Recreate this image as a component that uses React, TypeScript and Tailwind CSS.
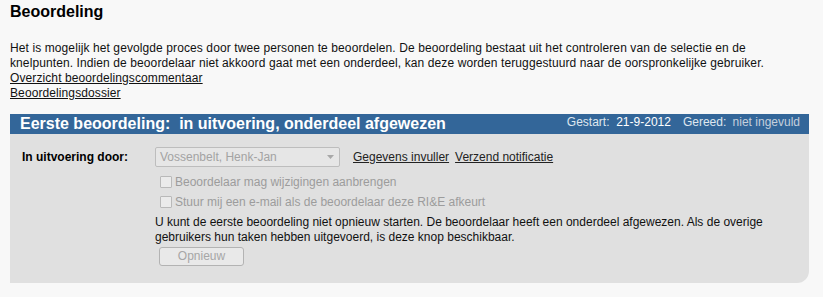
import React from "react";

const font = { fontFamily: '"Liberation Sans", Arial, sans-serif' };

function Checkbox({ label }: { label: string }) {
  return (
    <div className="flex items-center h-[20px] pl-[5px]">
      <span className="w-[12px] h-[12px] border border-[#b9b9b9] bg-[#ebebeb] rounded-[1px] shrink-0" />
      <span className="ml-[3px] text-[12px] leading-[20px] text-[#9c9c9c]">{label}</span>
    </div>
  );
}

export default function App() {
  return (
    <div className="w-[823px] h-[297px] bg-[#f8f8f8] pl-[10px] pt-[3px] text-[#111]" style={font}>
      <h1 className="text-[16px] leading-[18px] font-bold text-black">Beoordeling</h1>
      <div className="w-[775px] mt-[20px] text-[12px] leading-[15px] tracking-[0.1px]">
        <p>
          Het is mogelijk het gevolgde proces door twee personen te beoordelen. De beoordeling bestaat uit het controleren van de selectie en de knelpunten. Indien de beoordelaar niet akkoord gaat met een onderdeel, kan deze worden teruggestuurd naar de oorspronkelijke gebruiker.
        </p>
        <a href="#" className="block underline text-[#111]">Overzicht beoordelingscommentaar</a>
        <a href="#" className="block underline text-[#111]">Beoordelingsdossier</a>
      </div>

      <div className="w-[799px] mt-[13px] bg-[#e0e0e0] rounded-br-[12px]">
        <div className="flex justify-between h-[20px] bg-[#336699] pl-[10px] pr-[9px]">
          <span className="text-white font-bold text-[16px] leading-[20px] whitespace-pre">Eerste beoordeling:  in uitvoering, onderdeel afgewezen</span>
          <span className="text-[12px] leading-[14px] pt-[1px] whitespace-pre">
            <span className="text-[#dfe6ef]">Gestart: </span>
            <span className="text-white"> 21-9-2012</span>
            <span className="text-[#dfe6ef] ml-[12px]">Gereed: </span>
            <span className="text-[#c5cfdc] ml-[3px]">niet ingevuld</span>
          </span>
        </div>

        <div className="flex pl-[12px] pt-[13px] pb-[17px] pr-[20px]">
          <div className="w-[133px] shrink-0 text-[12px] font-bold leading-[20px] text-black">In uitvoering door:</div>
          <div className="flex-1 text-[12px]">
            <div className="flex items-center h-[20px]">
              <div className="w-[185px] h-[20px] border border-[#bdbdbd] rounded-[2px] bg-[#e6e6e6] flex items-center justify-between pl-[4px] pr-[5px]">
                <span className="text-[#a3a3a3] leading-[18px]">Vossenbelt, Henk-Jan</span>
                <svg width="7" height="4" viewBox="0 0 7 4"><path d="M0 0 L7 0 L3.5 4 Z" fill="#a8a8a8" /></svg>
              </div>
              <a href="#" className="ml-[13px] underline text-[#222] leading-[20px]">Gegevens invuller</a>
              <a href="#" className="ml-[6px] underline text-[#222] leading-[20px]">Verzend notificatie</a>
            </div>
            <div className="mt-[5px]">
              <Checkbox label="Beoordelaar mag wijzigingen aanbrengen" />
              <Checkbox label="Stuur mij een e-mail als de beoordelaar deze RI&E afkeurt" />
            </div>
            <p className="mt-[3px] leading-[15px] text-[#111]">
              U kunt de eerste beoordeling niet opnieuw starten. De beoordelaar heeft een onderdeel afgewezen. Als de overige gebruikers hun taken hebben uitgevoerd, is deze knop beschikbaar.
            </p>
            <button className="mt-[2px] ml-[4px] w-[85px] h-[19px] border border-[#b3b3b3] rounded-[3px] bg-[#e9e9e9] text-[#a6a6a6] text-[12px] leading-[17px]">
              Opnieuw
            </button>
          </div>
        </div>
      </div>
    </div>
  );
}
